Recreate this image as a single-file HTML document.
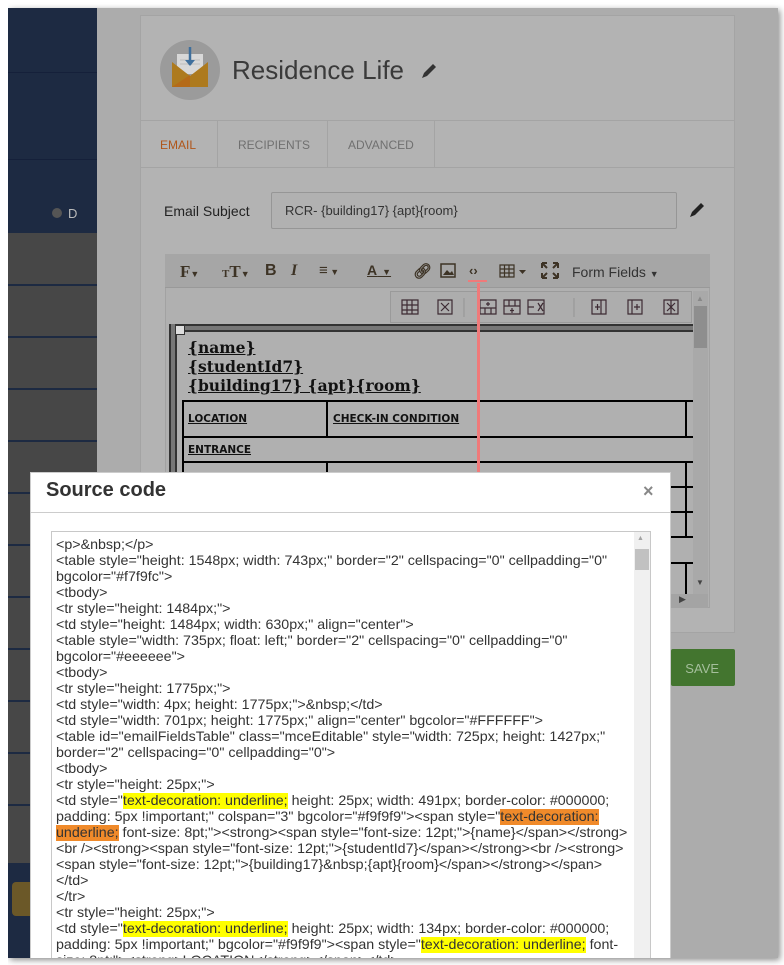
<!DOCTYPE html>
<html><head><meta charset="utf-8"><style>
*{margin:0;padding:0;box-sizing:border-box}
body{width:784px;height:965px;background:#fff;position:relative;overflow:hidden;font-family:"Liberation Sans",Arial,sans-serif}
.a{position:absolute}
.clip{position:absolute;left:0;top:0;width:778px;height:958px;overflow:hidden}
.frame{left:8px;top:8px;width:770px;height:950px;background:#acacac;overflow:hidden}
.code div{height:16px;white-space:nowrap}
.y{background:#ffff00}
.o{background:#f08a2a}
.ln{position:absolute;background:#000}
.tb{position:absolute;top:262px;font-weight:bold;color:#3d3325;font-size:16px}
</style></head><body>
<div class="a" style="left:8px;top:8px;width:770px;height:950px;box-shadow:2px 2px 6px rgba(0,0,0,.45);background:#acacac"></div>
<div class="clip">
<div class="a frame">
 <div class="a" style="left:0;top:0;width:89px;height:225px;background:#1d2a42"></div>
 <div class="a" style="left:0;top:64px;width:89px;height:1px;background:#15203a"></div>
 <div class="a" style="left:0;top:151px;width:89px;height:1px;background:#15203a"></div>
 <div class="a" style="left:44px;top:200px;width:10px;height:10px;border-radius:50%;background:#555"></div>
 <div class="a" style="left:60px;top:198px;font-size:13px;color:#bbb">D</div>
 <div class="a" style="left:0;top:225px;width:89px;height:640px;background:#474747"></div>
 <div class="a" style="left:0;top:276px;width:89px;height:2px;background:#1d2a42"></div>
 <div class="a" style="left:0;top:328px;width:89px;height:2px;background:#1d2a42"></div>
 <div class="a" style="left:0;top:380px;width:89px;height:2px;background:#1d2a42"></div>
 <div class="a" style="left:0;top:432px;width:89px;height:2px;background:#1d2a42"></div>
 <div class="a" style="left:0;top:484px;width:89px;height:2px;background:#1d2a42"></div>
 <div class="a" style="left:0;top:536px;width:89px;height:2px;background:#1d2a42"></div>
 <div class="a" style="left:0;top:588px;width:89px;height:2px;background:#1d2a42"></div>
 <div class="a" style="left:0;top:640px;width:89px;height:2px;background:#1d2a42"></div>
 <div class="a" style="left:0;top:692px;width:89px;height:2px;background:#1d2a42"></div>
 <div class="a" style="left:0;top:744px;width:89px;height:2px;background:#1d2a42"></div>
 <div class="a" style="left:0;top:796px;width:89px;height:2px;background:#1d2a42"></div>
 <div class="a" style="left:0;top:855px;width:89px;height:95px;background:#1d2a42"></div>
 <div class="a" style="left:4px;top:874px;width:30px;height:34px;background:#6b5828;border-radius:4px"></div>
</div>

<div class="a" style="left:140px;top:15px;width:595px;height:618px;background:#b3b3b3;border:1px solid #a4a4a4"></div>
<div class="a" style="left:140px;top:120px;width:595px;height:1px;background:#a4a4a4"></div>
<div class="a" style="left:140px;top:167px;width:595px;height:1px;background:#a4a4a4"></div>
<div class="a" style="left:217px;top:120px;width:1px;height:47px;background:#a4a4a4"></div>
<div class="a" style="left:327px;top:120px;width:1px;height:47px;background:#a4a4a4"></div>
<div class="a" style="left:434px;top:120px;width:1px;height:47px;background:#a4a4a4"></div>
<div class="a" style="left:160px;top:138px;font-size:12px;color:#b0561a">EMAIL</div>
<div class="a" style="left:238px;top:138px;font-size:12px;color:#707070">RECIPIENTS</div>
<div class="a" style="left:348px;top:138px;font-size:12px;color:#707070">ADVANCED</div>
<div class="a" style="left:160px;top:40px;width:60px;height:60px;border-radius:50%;background:#9b9b9b"></div>
<svg class="a" style="left:170px;top:44px" width="40" height="44" viewBox="0 0 40 44">
 <rect x="7" y="10" width="26" height="20" fill="#d8d8d8"/>
 <line x1="10" y1="16" x2="30" y2="16" stroke="#bbb"/><line x1="10" y1="20" x2="30" y2="20" stroke="#bbb"/>
 <path d="M20 3v18" stroke="#3f6f9c" stroke-width="2.5"/><path d="M15 16l5 6 5-6z" fill="#3f6f9c"/>
 <path d="M2 18l18 14 18-14v25H2z" fill="#ad7a1e"/><path d="M2 43l18-12v12z" fill="#b56a18"/>
</svg>
<div class="a" style="left:232px;top:55px;font-size:26px;color:#3a3a3a">Residence Life</div>
<svg class="a" style="left:420px;top:62px" width="18" height="18"><path d="M2 16l2-5 9-9 3 3-9 9z" fill="#333"/></svg>
<div class="a" style="left:164px;top:203px;font-size:14px;color:#222">Email Subject</div>
<div class="a" style="left:271px;top:192px;width:406px;height:37px;background:#b1b1b1;border:1px solid #969696;border-radius:2px;font-size:13px;color:#333;padding:10px 13px">RCR- {building17} {apt}{room}</div>
<svg class="a" style="left:688px;top:201px" width="18" height="18"><path d="M2 16l2-5 9-9 3 3-9 9z" fill="#222"/></svg>

<div class="a" style="left:165px;top:254px;width:545px;height:354px;background:#b0b0b0;border:1px solid #a2a2a2"></div>
<div class="a" style="left:165px;top:254px;width:545px;height:34px;background:#a6a6a6;border-bottom:1px solid #999"></div>
<div class="tb" style="left:180px;font-family:'Liberation Serif',serif;font-size:17px">F<span style="font-size:9px">▼</span></div>
<div class="tb" style="left:222px;font-family:'Liberation Serif',serif;font-size:17px"><span style="font-size:11px">T</span>T<span style="font-size:9px">▼</span></div>
<div class="tb" style="left:265px">B</div>
<div class="tb" style="left:291px;font-style:italic;font-family:'Liberation Serif',serif">I</div>
<div class="tb" style="left:319px;font-size:15px">≡<span style="font-size:9px"> ▼</span></div>
<div class="tb" style="left:367px;font-size:14px;text-decoration:underline">A<span style="font-size:9px;text-decoration:none"> &nbsp;▼</span></div>
<div class="tb" style="left:413px;font-size:15px">🔗︎</div>
<svg class="a" style="left:440px;top:263px" width="16" height="15"><rect x="1" y="1" width="14" height="13" fill="none" stroke="#3d3325" stroke-width="1.5"/><path d="M3 12l4-5 3 3 2-2 2 4z" fill="#3d3325"/></svg>
<div class="tb" style="left:469px;font-size:13px;top:263px">‹›</div>
<div class="a" style="left:468px;top:280px;width:19px;height:2px;background:#f07a7a"></div>
<svg class="a" style="left:499px;top:264px" width="30" height="14"><path d="M1 1h14v12H1zM1 5h14M1 9h14M5.5 1v12M10 1v12" fill="none" stroke="#3d3325" stroke-width="1.2"/><path d="M20 6h7l-3.5 4z" fill="#3d3325"/></svg>
<svg class="a" style="left:541px;top:262px" width="18" height="17"><path d="M1 1h5M1 1v5M1 1l5 5M17 1h-5M17 1v5M17 1l-5 5M1 16h5M1 16v-5M1 16l5-5M17 16h-5M17 16v-5M17 16l-5-5" stroke="#3d3325" stroke-width="2"/></svg>
<div class="a" style="left:572px;top:264px;font-size:14px;color:#333">Form Fields <span style="font-size:9px">▼</span></div>

<div class="a" style="left:390px;top:291px;width:302px;height:32px;border:1px solid #9a9a9a;background:#adadad"></div>
<svg class="a" style="left:390px;top:291px" width="302" height="32" fill="none" stroke="#3d2b33" stroke-width="1.2">
 <path d="M12 9h16v14H12zM12 14h16M12 19h16M17 9v14M22 9v14"/>
 <path d="M48 9h14v14H48zM51 12l8 8M59 12l-8 8"/>
 <path d="M74 7v19M184 7v19" stroke="#999"/>
 <path d="M90 9h16v14H90zM90 17h16M98 11v4M96 13h4M95 17v6M101 17v6"/>
 <path d="M114 9h16v14H114zM114 15h16M122 17v5M120 19.5h4M119 9v6M125 9v6"/>
 <path d="M138 9h16v14H138zM138 16h6M148 12l5 8M153 12l-5 8"/>
 <path d="M202 9h14v14H202zM211 9v14M205 16h5M207.5 13v6"/>
 <path d="M238 9h14v14H238zM242 9v14M244 16h6M247 13v6"/>
 <path d="M274 9h14v14H274zM277 12l8 8M285 12l-8 8M281 9v14" />
</svg>
<div class="a" style="left:693px;top:291px;width:15px;height:303px;background:#a9a9a9"></div>
<div class="a" style="left:694px;top:306px;width:13px;height:42px;background:#8e8e8e"></div>
<div class="a" style="left:696px;top:294px;font-size:8px;color:#888">▲</div>
<div class="a" style="left:696px;top:578px;font-size:8px;color:#444">▼</div>
<div class="a" style="left:665px;top:594px;width:43px;height:14px;background:#a4a4a4"></div>
<div class="a" style="left:679px;top:594px;font-size:9px;color:#444">▶</div>

<div class="a" style="left:169px;top:324px;width:524px;height:8px;border-top:2px solid #333;border-bottom:2px solid #333;background:#777"></div>
<div class="a" style="left:169px;top:324px;width:8px;height:148px;border-left:2px solid #333;border-right:2px solid #333;background:#777"></div>
<div class="a" style="left:175px;top:325px;width:10px;height:10px;background:#ddd;border:1px solid #333"></div>
<div class="a" style="left:188px;top:338px;font-family:'DejaVu Serif',serif;font-weight:bold;font-size:15.5px;line-height:19px;color:#111;text-decoration:underline">{name}<br>{studentId7}<br>{building17} {apt}{room}</div>
<div class="ln" style="left:182px;top:400px;width:511px;height:2px"></div>
<div class="ln" style="left:182px;top:436px;width:511px;height:2px"></div>
<div class="ln" style="left:182px;top:461px;width:511px;height:2px"></div>
<div class="ln" style="left:182px;top:400px;width:2px;height:80px"></div>
<div class="ln" style="left:326px;top:400px;width:2px;height:38px"></div>
<div class="ln" style="left:326px;top:462px;width:2px;height:20px"></div>
<div class="ln" style="left:685px;top:400px;width:2px;height:38px"></div>
<div class="a" style="left:188px;top:413px;font-family:'DejaVu Sans',sans-serif;font-weight:bold;font-size:10.5px;color:#111;text-decoration:underline">LOCATION</div>
<div class="a" style="left:333px;top:413px;font-family:'DejaVu Sans',sans-serif;font-weight:bold;font-size:10.5px;color:#111;text-decoration:underline">CHECK-IN CONDITION</div>
<div class="a" style="left:188px;top:444px;font-family:'DejaVu Sans',sans-serif;font-weight:bold;font-size:10.5px;color:#111;text-decoration:underline">ENTRANCE</div>
<div class="ln" style="left:671px;top:486px;width:22px;height:2px"></div>
<div class="ln" style="left:671px;top:511px;width:22px;height:2px"></div>
<div class="ln" style="left:671px;top:536px;width:22px;height:2px"></div>
<div class="ln" style="left:671px;top:562px;width:22px;height:2px"></div>
<div class="ln" style="left:685px;top:462px;width:2px;height:76px"></div>
<div class="ln" style="left:685px;top:562px;width:2px;height:32px"></div>

<div class="a" style="left:671px;top:649px;width:64px;height:37px;background:#43752f;border-radius:2px;color:#a5bf9c;font-size:13px;text-align:right;padding:12px 16px 0 0">SAVE</div>

<div class="a" style="left:477px;top:283px;width:3px;height:222px;background:#f07a7a"></div>
<svg class="a" style="left:468px;top:496px" width="22" height="26"><path d="M2 2l9 20 9-20-9 8z" fill="#e86e6e"/></svg>

<div class="a" style="left:30px;top:472px;width:641px;height:490px;background:#fff;border:1px solid #ccc"></div>
<div class="a" style="left:46px;top:479px;font-size:20px;font-weight:bold;color:#333">Source code</div>
<div class="a" style="left:643px;top:481px;font-size:18px;font-weight:bold;color:#888">×</div>
<div class="a" style="left:30px;top:512px;width:641px;height:1px;background:#ccc"></div>
<div class="a" style="left:51px;top:531px;width:600px;height:440px;border:1px solid #c8c8c8;background:#fff"></div>
<div class="a" style="left:634px;top:532px;width:16px;height:440px;background:#f0f0f0"></div>
<div class="a" style="left:635px;top:549px;width:14px;height:21px;background:#c1c1c1"></div>
<div class="a" style="left:637px;top:535px;font-size:7px;color:#a3a3a3">▲</div>
<div class="a code" style="left:56px;top:537px;font-size:14.25px;line-height:16px;color:#333">
<div>&lt;p&gt;&amp;nbsp;&lt;/p&gt;</div>
<div>&lt;table style="height: 1548px; width: 743px;" border="2" cellspacing="0" cellpadding="0"</div>
<div>bgcolor="#f7f9fc"&gt;</div>
<div>&lt;tbody&gt;</div>
<div>&lt;tr style="height: 1484px;"&gt;</div>
<div>&lt;td style="height: 1484px; width: 630px;" align="center"&gt;</div>
<div>&lt;table style="width: 735px; float: left;" border="2" cellspacing="0" cellpadding="0"</div>
<div>bgcolor="#eeeeee"&gt;</div>
<div>&lt;tbody&gt;</div>
<div>&lt;tr style="height: 1775px;"&gt;</div>
<div>&lt;td style="width: 4px; height: 1775px;"&gt;&amp;nbsp;&lt;/td&gt;</div>
<div>&lt;td style="width: 701px; height: 1775px;" align="center" bgcolor="#FFFFFF"&gt;</div>
<div>&lt;table id="emailFieldsTable" class="mceEditable" style="width: 725px; height: 1427px;"</div>
<div>border="2" cellspacing="0" cellpadding="0"&gt;</div>
<div>&lt;tbody&gt;</div>
<div>&lt;tr style="height: 25px;"&gt;</div>
<div>&lt;td style="<span class="y">text-decoration: underline;</span> height: 25px; width: 491px; border-color: #000000;</div>
<div>padding: 5px !important;" colspan="3" bgcolor="#f9f9f9"&gt;&lt;span style="<span class="o">text-decoration:</span></div>
<div><span class="o">underline;</span> font-size: 8pt;"&gt;&lt;strong&gt;&lt;span style="font-size: 12pt;"&gt;{name}&lt;/span&gt;&lt;/strong&gt;</div>
<div>&lt;br /&gt;&lt;strong&gt;&lt;span style="font-size: 12pt;"&gt;{studentId7}&lt;/span&gt;&lt;/strong&gt;&lt;br /&gt;&lt;strong&gt;</div>
<div>&lt;span style="font-size: 12pt;"&gt;{building17}&amp;nbsp;{apt}{room}&lt;/span&gt;&lt;/strong&gt;&lt;/span&gt;</div>
<div>&lt;/td&gt;</div>
<div>&lt;/tr&gt;</div>
<div>&lt;tr style="height: 25px;"&gt;</div>
<div>&lt;td style="<span class="y">text-decoration: underline;</span> height: 25px; width: 134px; border-color: #000000;</div>
<div>padding: 5px !important;" bgcolor="#f9f9f9"&gt;&lt;span style="<span class="y">text-decoration: underline;</span> font-</div>
<div>size: 8pt;"&gt;&lt;strong&gt;LOCATION&lt;/strong&gt;&lt;/span&gt;&lt;/td&gt;</div>
</div>
</div>
<div class="a" style="left:0;top:0;width:8px;height:965px;background:#fff"></div>
</body></html>
